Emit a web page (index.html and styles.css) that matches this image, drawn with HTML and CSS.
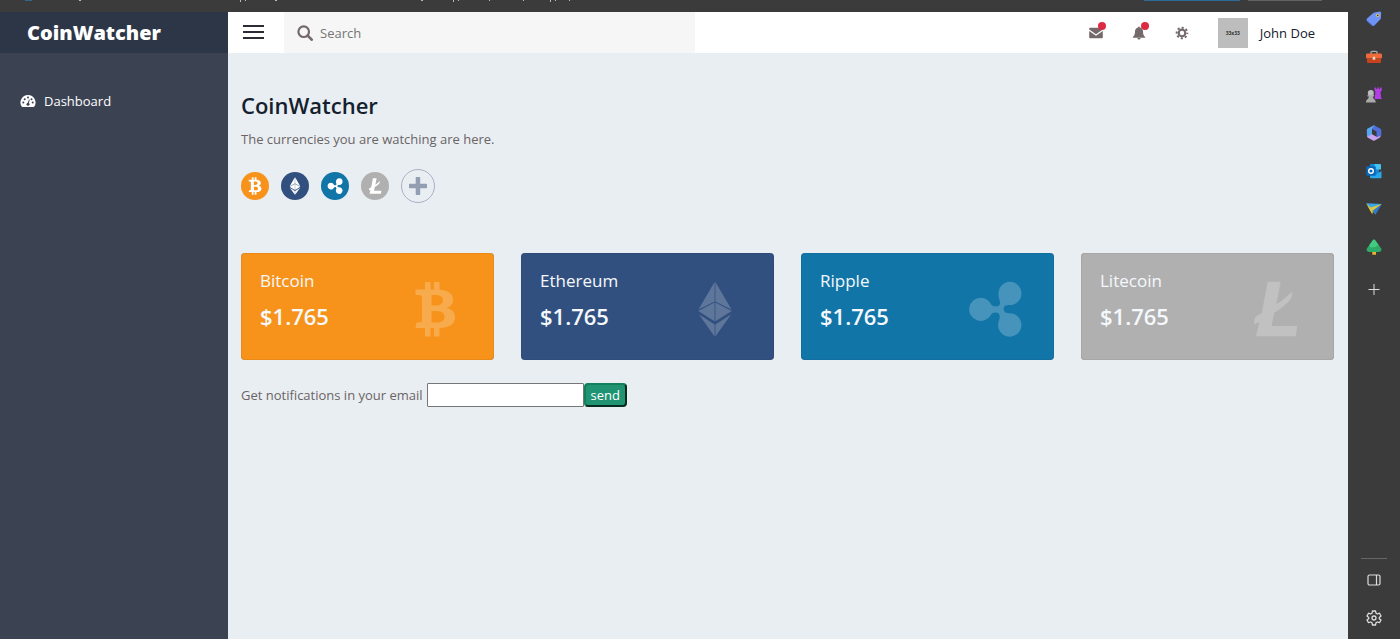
FILE: index.html
```html
<!DOCTYPE html>
<html lang="en">
<head>
  <meta charset="UTF-8" />
  <meta name="viewport" content="width=device-width, initial-scale=1.0" />
  <title>CoinWatcher</title>
  <link rel="stylesheet" href="styles.css">
</head>
<body>
  <!-- Coin symbols, shared by the badges and the cards -->
  <svg class="defs" aria-hidden="true">
    <symbol id="btc" viewBox="0 0 60 56">
      <path fill-rule="evenodd" d="M20 1h5.500v7.500h3.500V1h5.500v7.800c8 .6 13.500 3.600 13.500 9.700 0 4.500-2.500 7.200-6.500 8.400 5.500 1 8.500 4.200 8.500 9.300 0 7-6 10.500-15.500 10.800v8.500H29V47h-3.500v8.500H20V47h-9.500l1-5.500h3q2.500 0 2.500-2.500V17q0-3-3-3h-3.500V8.500H20zM26.500 14v10.500h3.500c5 0 8-1.500 8-5.300S35 14 30 14zM26.500 30v11.500h4c6 0 9-1.700 9-5.800S36 30 30.500 30z"/>
    </symbol>
    <symbol id="eth" viewBox="0 0 60 56">
      <path d="M29.600 1v19.600L13.500 28.500zM30.400 1v19.600L46.500 28.500zM29.600 21.600v18.600L13.300 30zM30.400 21.600v18.600L46.700 30zM29.600 43.500V55.500L14 33.500zM30.400 43.500V55.500L46 33.500z"/>
    </symbol>
    <symbol id="xrp" viewBox="0 0 60 56">
      <path d="M15.700 16.700c5 0 8.500 3 10.300 6.500 1.500 2 4 2.500 6.500 2 2.500-.7 3-2.500 2.300-5.200C30.500 9 37 .7 44.700.7a11.700 11.700 0 0 1 0 23.400c-4 0-6 .9-6 4s2 4.200 6 4.200a11.700 11.700 0 1 1-10.600 6.800c1.200-4 .7-6.700-2.100-7.400-2.500-.5-4.500 0-6 2a11.600 11.600 0 1 1-10.300-17z"/>
    </symbol>
    <symbol id="ltc" viewBox="0 0 60 56">
      <path d="M22.700.7h13l-4.400 22.600c7.500-4.300 9.700-7.500 16-12.600-.2 4-1 6-2.300 8.300-5 5.500-9.700 9-15.700 12.700L26.500 45h25.800l-1.600 10.300H11l3.300-14c-2 .4-3 1-4.800 2.500-1-3 0-6 .8-7.500 1.600-2 4.200-2.800 6.400-4z"/>
    </symbol>
  </svg>

  <div class="browser-strip">
    <svg class="strip-marks" aria-hidden="true">
      <g fill="#bbb">
        <rect x="79" width="2" height="1"/><rect x="240" width="1" height="2"/><rect x="245" width="1" height="1"/>
        <rect x="275" width="2" height="1"/><rect x="421" width="2" height="1"/><rect x="453" width="1" height="2"/>
        <rect x="458" width="1" height="1"/><rect x="489" width="1" height="1"/><rect x="523" width="1" height="1"/>
        <rect x="550" width="1" height="2"/><rect x="555" width="1" height="1"/><rect x="569" width="1" height="1"/>
      </g>
      <rect x="25" width="7" height="1" fill="#2c6a8d"/>
      <rect x="1144" width="96" height="1" fill="#2d6a97"/>
      <rect x="1248" width="74" height="1" fill="#636363"/>
    </svg>
  </div>

  <div class="window">
    <aside class="sidebar">
      <a href="#" class="logo">CoinWatcher</a>
      <nav class="menu">
        <a href="#">
          <svg viewBox="0 0 16 14" width="16" height="14" aria-hidden="true">
            <path fill="#fff" d="M8 1a7.500 7.500 0 0 1 6.300 11.600q-.3.400-.8.400h-11q-.5 0-.8-.4A7.500 7.500 0 0 1 8 1z"/>
            <g fill="#3b4354"><circle cx="3.300" cy="8.500" r="1"/><circle cx="4.700" cy="5.200" r="1"/><circle cx="8" cy="3.600" r="1"/><circle cx="11.500" cy="5.200" r="1"/><circle cx="12.700" cy="8.500" r="1"/><circle cx="8" cy="10.300" r="1.500"/><path d="M7.500 10l1.400-4.500.8.300L8.700 10z"/></g>
          </svg>
          Dashboard
        </a>
      </nav>
    </aside>

    <div class="page">
      <header class="topbar">
        <button class="menu-toggle" aria-label="Toggle menu"><span></span><span></span><span></span></button>
        <label class="search">
          <svg viewBox="0 0 16 16" width="16" height="16" aria-hidden="true"><circle cx="6.700" cy="6.700" r="5.300" fill="none" stroke="#75676a" stroke-width="2.200"/><path d="M10.700 10.700l4 4" stroke="#75676a" stroke-width="2.600" stroke-linecap="round"/></svg>
          <input type="search" placeholder="Search" aria-label="Search">
        </label>
        <div class="actions">
          <button class="action" aria-label="Messages">
            <svg viewBox="0 0 14 12" width="14" height="12" aria-hidden="true"><path fill="#756a6b" d="M1 .8h12q.8 0 .8.900v.7L7 7.300.2 2.400v-.7Q.2.800 1 .8zM.2 3.900L7 8.700l6.800-4.800v6.400q0 1-.9 1H1.100q-.9 0-.9-1z"/></svg>
            <span class="dot"></span>
          </button>
          <button class="action" aria-label="Notifications">
            <svg viewBox="0 0 14 14" width="14" height="14" aria-hidden="true"><path fill="#756a6b" d="M7 .4q.9 0 .9 1.100c2 .5 3.100 2 3.100 4 0 2.600.6 4.100 2.200 5.500v.7H.8V11C2.400 9.600 3 8.100 3 5.500c0-2 1.100-3.500 3.100-4Q6.100.4 7 .4zM5.300 12h3.400Q8.500 13.600 7 13.600T5.300 12z"/></svg>
            <span class="dot"></span>
          </button>
          <button class="action" aria-label="Settings">
            <svg viewBox="0 0 14 14" width="14" height="14" aria-hidden="true"><circle cx="7" cy="7" r="3.300" fill="none" stroke="#756a6b" stroke-width="2.200"/><circle cx="7" cy="7" r="5.300" fill="none" stroke="#756a6b" stroke-width="2" stroke-dasharray="2.100 2.063" stroke-dashoffset="1.050"/></svg>
          </button>
        </div>
        <a href="#" class="user"><span class="avatar">33x33</span>John Doe</a>
      </header>

      <main class="content">
        <h1>CoinWatcher</h1>
        <p>The currencies you are watching are here.</p>
        <div class="coins">
          <button class="coin btc" aria-label="Bitcoin"><svg><use href="#btc"/></svg></button>
          <button class="coin eth" aria-label="Ethereum"><svg><use href="#eth"/></svg></button>
          <button class="coin xrp" aria-label="Ripple"><svg><use href="#xrp"/></svg></button>
          <button class="coin ltc" aria-label="Litecoin"><svg><use href="#ltc"/></svg></button>
          <button class="add" aria-label="Add coin"><svg viewBox="0 0 18 18" width="18" height="18"><path fill="#949eb3" d="M7.500 0h3q.7 0 .7.700v6h6q.8 0 .8.800v3q0 .8-.8.800h-6v6q0 .7-.7.700h-3q-.8 0-.8-.7v-6h-6q-.7 0-.7-.8v-3q0-.8.700-.8h6v-6q0-.7.800-.7z"/></svg></button>
        </div>

        <section class="cards">
          <article class="card btc">
            <div><h2>Bitcoin</h2><strong>$1.765</strong></div>
            <svg><use href="#btc"/></svg>
          </article>
          <article class="card eth">
            <div><h2>Ethereum</h2><strong>$1.765</strong></div>
            <svg><use href="#eth"/></svg>
          </article>
          <article class="card xrp">
            <div><h2>Ripple</h2><strong>$1.765</strong></div>
            <svg><use href="#xrp"/></svg>
          </article>
          <article class="card ltc">
            <div><h2>Litecoin</h2><strong>$1.765</strong></div>
            <svg><use href="#ltc"/></svg>
          </article>
        </section>

        <form class="notify">
          <label for="email">Get notifications in your email</label>
          <input type="email" id="email">
          <button type="submit">send</button>
        </form>
      </main>
    </div>
  </div>

  <aside class="tools">
    <button aria-label="Shopping">
      <svg viewBox="0 0 16 16"><path fill="#6f93f5" d="M8.500 1.500l5.300-.9q1.200 0 1.400 1.200l-.3 5.200q0 .8-.7 1.500l-5.800 6q-1.300 1-2.500 0L1 10q-1-1.200 0-2.500l6-5.300q.7-.6 1.500-.7z"/><path fill="#4d6fe0" d="M.7 9l7 6q-1 .3-1.800-.5L1 10q-.4-.5-.3-1z"/><circle cx="11.700" cy="4.300" r="1.800" fill="#e6d27a"/><circle cx="11.700" cy="4.300" r=".9" fill="#333"/></svg>
    </button>
    <button aria-label="Tools">
      <svg viewBox="0 0 16 16"><path d="M5 5V3.300q0-1 1-1h4q1 0 1 1V5" fill="none" stroke="#aaa" stroke-width="1.300"/><rect y="4.500" width="16" height="5" rx="1" fill="#ee6a39"/><path fill="#c8431d" d="M1 9.500h14V13q0 1-1 1H2q-1 0-1-1z"/><rect x="6.700" y="7.800" width="2.600" height="3" rx=".6" fill="#f3d6c6"/></svg>
    </button>
    <button aria-label="Games">
      <svg viewBox="0 0 16 16"><path fill="#b23fe6" d="M8.600.5h1.500V2h1.200V.5h1.600V2H14V.5h1.700v3.200l-1.200 1.100.6 5.700 1 1.500H8.500l1-7.200-.9-1.100z"/><circle cx="4.800" cy="6" r="3" fill="#bdbdbd"/><path fill="#aaa" d="M1.500 8h6.600v1.500H6.800q.1 2.200 2 3.200.9.500.9 2.800H0q0-2.300.9-2.800 1.900-1 2-3.200H1.500z"/></svg>
    </button>
    <button aria-label="Microsoft 365">
      <svg viewBox="0 0 16 16"><path fill="#58a6ee" d="M8 .3L10 1.500 6 4v6L1 12.200.8 5Q.8 4 1.700 3.500z"/><path fill="#c9a2ee" d="M1 11.800l5-2.500 4.500 2.500 4-2.300v2q-.2.800-1 1.300L8.700 15.500q-.9.500-1.700 0L2 12.800z"/><path fill="#506ddb" d="M8.500.4l6 3.400q.8.500.8 1.400v5.300l-4.700 1.800V6.500L6 4z"/></svg>
    </button>
    <button aria-label="Outlook">
      <svg viewBox="0 0 16 16"><rect x="4" y="1" width="9" height="10" rx="1" fill="#1687d7"/><path fill="#45c4f4" d="M8.500 1H14q1 0 1 1v4.500H8.500z"/><path fill="#2aa8ea" d="M4 8l6 3.500L15.500 8v6.500q0 .8-1 .8H5q-1 0-1-1z"/><rect x=".3" y="3.300" width="9.400" height="9.400" rx="1" fill="#0867b8"/><circle cx="5" cy="8" r="2.300" fill="none" stroke="#fff" stroke-width="1.400"/></svg>
    </button>
    <button aria-label="Drop">
      <svg viewBox="0 0 16 16"><path fill="#39a7e8" d="M.2 2.200L15.800 3 5 8.500z"/><path fill="#2f77d3" d="M15.800 3L9.500 13.800 5.500 8.300z"/><path fill="#dfc43d" d="M.2 2.200l3.800 7.200 2.300 3.800.9-4L15.800 3 4.500 6.500z"/><path fill="#56a77a" d="M5.800 8.700l3.700 5.100-2.300-4.600z"/></svg>
    </button>
    <button aria-label="Tree">
      <svg viewBox="0 0 16 16"><rect x="6.300" y="11.500" width="3.700" height="4.300" rx=".6" fill="#eeb32c"/><path fill="#2cac68" d="M7 1q1-1 2 0l6 8.300q1.500 3.500-2 3.700H3q-3.500-.2-2-3.700z"/><path fill="#43c980" d="M7 1q1-1 2 0l3.500 5q-3 3-8 2.500L3.200 6.300z"/></svg>
    </button>
    <button class="tools-add" aria-label="Add">
      <svg viewBox="0 0 16 16"><path d="M8 3v11M2.500 8.500h11" stroke="#ddd" stroke-width="1"/></svg>
    </button>
    <div class="tools-bottom">
      <button aria-label="Sidebar">
        <svg viewBox="0 0 16 16" fill="none" stroke="#ddd" stroke-width="1.200"><rect x="2" y="3" width="12" height="10" rx="1.500"/><path d="M10.500 3v10"/></svg>
      </button>
      <button aria-label="Browser settings">
        <svg viewBox="0 0 16 16" fill="none" stroke="#ddd" stroke-width="1.300" stroke-linejoin="round"><circle cx="8" cy="8" r="2"/><path d="M6.500 1h3l.5 2.200 1.300.8 2.200-.8L15 6l-1.700 1.400v1.300L15 10l-1.500 2.700-2.200-.7-1.300.8-.5 2.200h-3L6 12.800 4.700 12l-2.200.7L1 10l1.700-1.300V7.400L1 6l1.500-2.800 2.200.8L6 3.200z"/></svg>
      </button>
    </div>
  </aside>
</body>
</html>
```
FILE: styles.css
```css
* {
  box-sizing: border-box;
}
body {
  margin: 0;
  min-height: 100vh;
  display: grid;
  grid-template-columns: 1fr 52px;
  grid-template-rows: 12px 1fr;
  background: #3b3b3b;
  color: #6b6465;
  font-family: "Open Sans", sans-serif;
  font-size: 13px;
}
a {
  color: inherit;
  text-decoration: none;
}
button {
  padding: 0;
  border: none;
  background: none;
  font-family: inherit;
  cursor: pointer;
}
svg {
  display: block;
}
.defs {
  position: absolute;
  width: 0;
  height: 0;
}

/* Browser frame */
.browser-strip {
  grid-column: 1;
  grid-row: 1;
}
.strip-marks {
  width: 100%;
  height: 2px;
}
.tools {
  grid-column: 2;
  grid-row: 1 / 3;
  display: flex;
  flex-direction: column;
}
.tools button {
  width: 100%;
  height: 38px;
  display: grid;
  place-items: center;
}
.tools svg {
  width: 16px;
  height: 16px;
}
.tools .tools-add {
  margin-top: 4px;
}
.tools-bottom {
  margin: auto 13px 2px;
  padding-top: 2px;
  border-top: 1px solid #666;
}

/* App */
.window {
  grid-column: 1;
  grid-row: 2;
  display: grid;
  grid-template-columns: 228px 1fr;
}
.sidebar {
  background: #3b4353;
  color: #fff;
}
.logo {
  display: flex;
  align-items: center;
  height: 41px;
  padding-left: 27px;
  background: #2d3646;
  font-size: 20px;
  font-weight: 800;
}
.menu {
  padding: 38px 20px;
}
.menu a {
  display: flex;
  align-items: center;
  gap: 8px;
  line-height: 20px;
}
.page {
  background: #e9eef2;
}
.topbar {
  display: flex;
  align-items: center;
  height: 41px;
  padding-right: 33px;
  background: #fff;
}
.menu-toggle {
  display: grid;
  gap: 4px;
  width: 21px;
  margin: 0 20px 2px 15px;
}
.menu-toggle span {
  height: 2px;
  background: #2c2c34;
}
.search {
  display: flex;
  align-items: center;
  gap: 7px;
  width: 411px;
  height: 41px;
  padding: 0 13px;
  background: #f6f6f6;
}
.search input {
  flex: 1;
  padding: 0;
  border: none;
  outline: none;
  background: none;
  font-family: inherit;
  font-size: 13px;
}
.search input::placeholder {
  color: #757575;
}
.actions {
  display: flex;
  gap: 29px;
  margin-left: auto;
}
.action {
  position: relative;
  display: grid;
  place-items: center;
  width: 14px;
  height: 14px;
}
.dot {
  position: absolute;
  top: -4px;
  right: -3px;
  width: 8px;
  height: 8px;
  border-radius: 50%;
  background: #dc2a41;
}
.user {
  display: flex;
  align-items: center;
  gap: 12px;
  margin-left: 29px;
  color: #14202e;
}
.avatar {
  display: grid;
  place-items: center;
  width: 30px;
  height: 30px;
  background: #bdbdbd;
  color: #333;
  font-size: 5px;
  font-weight: 700;
}

/* Content */
.content {
  padding: 36px 14px 36px 13px;
}
h1 {
  margin: 0;
  color: #14202e;
  font-size: 22px;
  font-weight: 600;
  line-height: 32px;
}
p {
  margin: 8px 0 20px;
  line-height: 20px;
}
.coins {
  display: flex;
  align-items: center;
  gap: 12px;
}
.coin {
  display: grid;
  place-items: center;
  width: 28px;
  height: 28px;
  border-radius: 50%;
}
.coin svg {
  width: 20px;
  height: 18px;
  fill: #fff;
}
.coin.xrp svg,
.coin.ltc svg {
  width: 18px;
  height: 16px;
}
.add {
  display: grid;
  place-items: center;
  width: 34px;
  height: 34px;
  border: 1px solid #a9b1c4;
  border-radius: 50%;
}
.cards {
  display: grid;
  grid-template-columns: repeat(4, 1fr);
  gap: 27px;
  margin: 50px 0 23px;
}
.card {
  display: flex;
  justify-content: space-between;
  align-items: flex-start;
  height: 107px;
  padding: 16px 29px 0 19px;
  border-radius: 4px;
  box-shadow: inset 0 0 1px rgba(0, 0, 0, 0.5);
  color: #f5f9fc;
}
.card h2 {
  margin: 0 0 7px;
  font-size: 17px;
  font-weight: 500;
  line-height: 24px;
}
.card strong {
  display: block;
  font-size: 22px;
  font-weight: 600;
  line-height: 32px;
}
.card svg {
  width: 60px;
  height: 56px;
  margin-top: 12px;
  fill: #fff;
  opacity: 0.22;
}
.btc {
  background: #f7931b;
}
.eth {
  background: #32507f;
}
.xrp {
  background: #1275a8;
}
.ltc {
  background: #b0b0b0;
}
.notify {
  display: flex;
  align-items: center;
}
.notify input {
  width: 157px;
  height: 24px;
  margin-left: 4px;
  border: 1px solid #767676;
  border-radius: 1px;
}
.notify button {
  height: 24px;
  padding: 0 5px;
  border: 2px outset #12805a;
  border-radius: 4px;
  background: #1f9372;
  color: #fff;
  font-size: 13px;
}
```
